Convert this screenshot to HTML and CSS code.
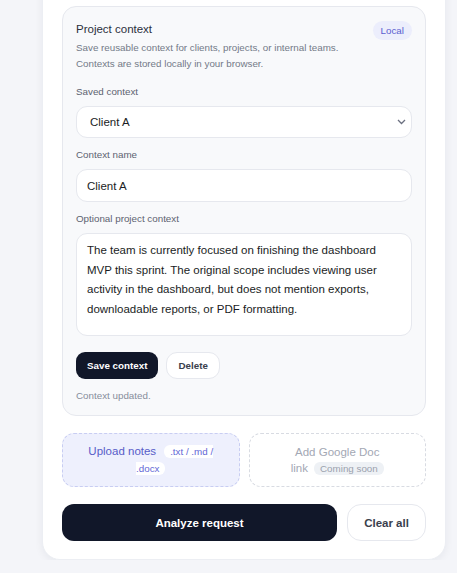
FILE: index.html
```html
<!DOCTYPE html>
<html lang="en">
<head>
    <meta charset="UTF-8">
    <meta name="viewport" content="width=device-width, initial-scale=1.0">
    <title>Request analyzer</title>
    <link rel="stylesheet" href="styles.css">
</head>
<body>
    <div class="page">
        <div class="card">
            <section class="context-panel">
                <div class="panel-head">
                    <h2>Project context</h2>
                    <span class="badge">Local</span>
                </div>
                <p class="hint">Save reusable context for clients, projects, or internal teams.<br>Contexts are stored locally in your browser.</p>

                <label class="field-label" for="savedContext">Saved context</label>
                <div class="select-wrap">
                    <select id="savedContext">
                        <option>Client A</option>
                        <option>Client B</option>
                    </select>
                    <svg class="chevron" width="9" height="6" viewBox="0 0 9 6"><path d="M1 1l3.5 3.5L8 1"/></svg>
                </div>

                <label class="field-label" for="contextName">Context name</label>
                <input type="text" id="contextName" value="Client A" />

                <label class="field-label" for="contextText">Optional project context</label>
                <textarea id="contextText">The team is currently focused on finishing the dashboard MVP this sprint. The original scope includes viewing user activity in the dashboard, but does not mention exports, downloadable reports, or PDF formatting.</textarea>

                <div class="panel-actions">
                    <button class="btn btn-dark">Save context</button>
                    <button class="btn btn-light">Delete</button>
                </div>
                <p class="status">Context updated.</p>
            </section>

            <div class="sources">
                <div class="source source-upload">
                    <span>Upload notes<span class="chip">.txt / .md / .docx</span></span>
                </div>
                <div class="source source-doc">
                    <span>Add Google Doc link<span class="chip chip-muted">Coming soon</span></span>
                </div>
            </div>

            <div class="main-actions">
                <button class="btn-main">Analyze request</button>
                <button class="btn-clear">Clear all</button>
            </div>
        </div>
    </div>
</body>
</html>
```

FILE: styles.css
```css
html, body {
    margin: 0;
    background: #f4f5f9;
}
body {
    font-family: "Liberation Sans", Arial, sans-serif;
    color: #1f2430;
}
.page {
    padding: 0 11px 0 42px;
}
.card {
    margin-top: -30px;
    padding: 35px 19px 18px;
    background: #fff;
    border: 1px solid #eceef3;
    border-radius: 18px;
    box-shadow: 0 2px 8px rgba(20, 26, 45, 0.06);
}
.context-panel {
    background: #f8f9fb;
    border: 1px solid #e6e8ee;
    border-radius: 14px;
    padding: 12px 13px 12px;
}
.panel-head {
    display: flex;
    justify-content: space-between;
    align-items: center;
}
.panel-head h2 {
    margin: 0;
    font-size: 11.5px;
    font-weight: normal;
    line-height: 19px;
    color: #2b303b;
}
.badge {
    margin-top: 2px;
    padding: 0 8px;
    height: 19px;
    line-height: 19px;
    font-size: 9.8px;
    color: #5b5fd0;
    background: #eceefc;
    border-radius: 10px;
}
.hint {
    margin: 0 0 13px;
    font-size: 9.8px;
    line-height: 16px;
    color: #737988;
}
.field-label {
    display: block;
    font-size: 9.8px;
    line-height: 14px;
    color: #5c6270;
    margin-bottom: 7px;
}
.select-wrap {
    position: relative;
    margin-bottom: 10px;
}
select, input, textarea {
    display: block;
    width: 100%;
    box-sizing: border-box;
    font-family: inherit;
    font-size: 11.5px;
    color: #1a1d24;
    background: #fff;
    border: 1px solid #e6e8ee;
    outline: none;
}
select {
    appearance: none;
    -webkit-appearance: none;
    height: 32px;
    padding: 0 24px 0 13px;
    border-radius: 11px;
}
.chevron {
    position: absolute;
    right: 6px;
    top: 13px;
    fill: none;
    stroke: #6b7080;
    stroke-width: 1.3;
    pointer-events: none;
}
input {
    height: 33px;
    padding: 0 10px;
    border-radius: 11px;
    margin-bottom: 10px;
}
textarea {
    height: 103px;
    padding: 7px 10px;
    line-height: 19.7px;
    border-radius: 11px;
    resize: none;
    overflow: hidden;
}
.panel-actions {
    display: flex;
    gap: 8px;
    margin-top: 16px;
}
.btn {
    height: 27px;
    font-family: inherit;
    font-size: 9.8px;
    font-weight: bold;
    border-radius: 9px;
    cursor: pointer;
}
.btn-dark {
    padding: 0 11px;
    color: #fff;
    background: #111729;
    border: none;
}
.btn-light {
    padding: 0 11px;
    color: #3a404c;
    background: #fff;
    border: 1px solid #e6e8ee;
    border-radius: 11px;
}
.status {
    margin: 10px 0 0;
    font-size: 9.8px;
    line-height: 14px;
    color: #878d9b;
}
.sources {
    display: grid;
    grid-template-columns: 1fr 1fr;
    gap: 9px;
    margin-top: 17px;
}
.source {
    height: 54px;
    box-sizing: border-box;
    display: flex;
    align-items: center;
    justify-content: center;
    padding: 0 16px;
    text-align: center;
    font-size: 11.5px;
    line-height: 16px;
    border-radius: 12px;
}
.source-upload {
    background: #eef0fd;
    border: 1px dashed #c8cdf2;
    color: #575cc8;
}
.source-doc {
    background: #fff;
    border: 1px dashed #d8dbe2;
    color: #a3a8b4;
}
.chip {
    margin-left: 8px;
    padding: 1px 6px;
    font-size: 9.8px;
    background: #fff;
    color: #6367d6;
    border-radius: 6px;
}
.chip-muted {
    margin-left: 6px;
    background: #eef1f5;
    color: #9ba1ad;
}
.main-actions {
    display: flex;
    gap: 10px;
    margin-top: 17px;
}
.btn-main, .btn-clear {
    height: 37px;
    font-family: inherit;
    font-size: 11.5px;
    font-weight: bold;
    cursor: pointer;
}
.btn-main {
    flex: 1;
    color: #fff;
    background: #111729;
    border: none;
    border-radius: 12px;
}
.btn-clear {
    width: 79px;
    color: #3a404c;
    background: #fff;
    border: 1px solid #e6e8ee;
    border-radius: 14px;
}
```
